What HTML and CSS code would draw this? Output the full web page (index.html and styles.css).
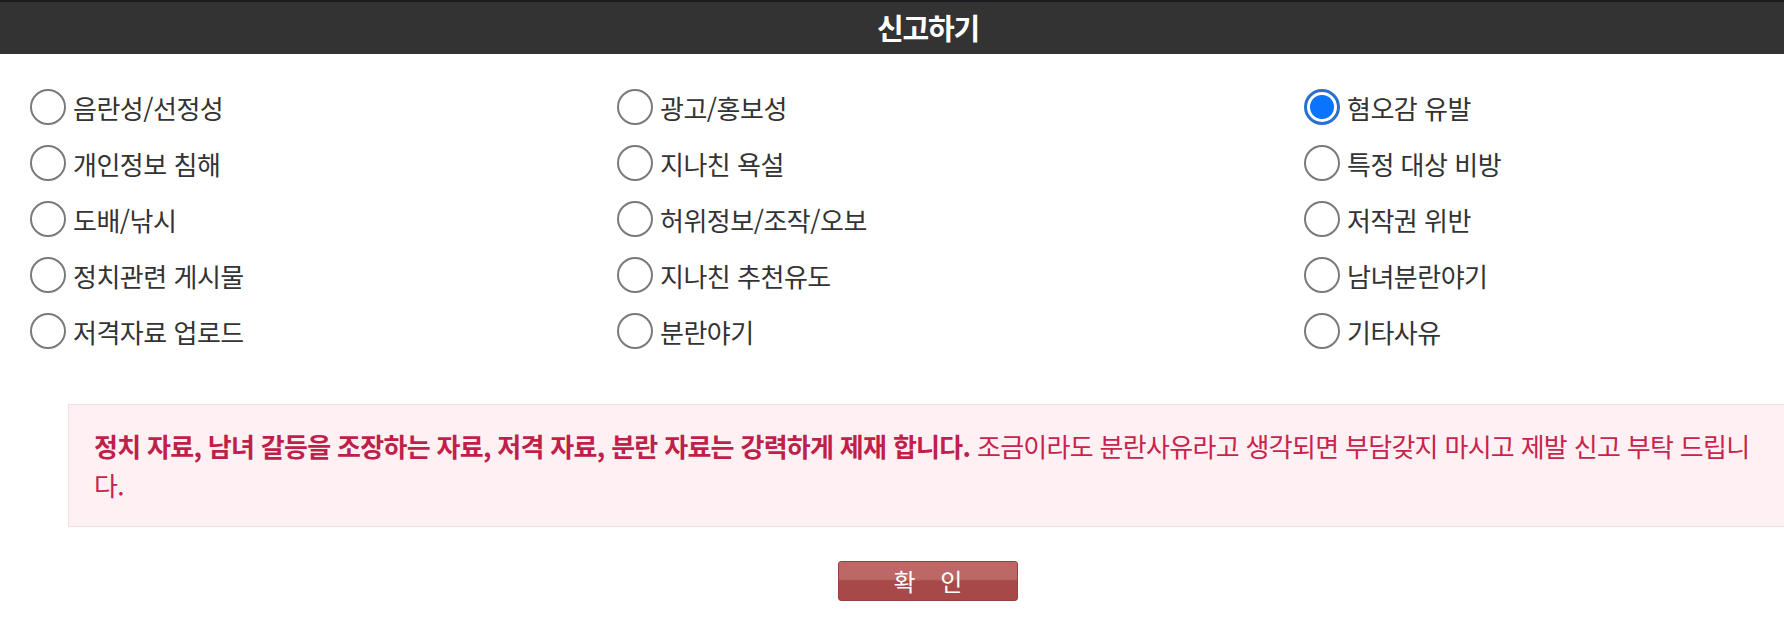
FILE: index.html
```html
<!DOCTYPE html>
<html lang="ko">
<head>
  <meta charset="UTF-8">
  <meta name="viewport" content="width=device-width, initial-scale=1.0">
  <title>신고하기</title>
  <link rel="stylesheet" href="styles.css">
</head>
<body>
  <div class="page">
    <h1 class="title">신고하기</h1>

    <form class="report">
      <div class="options">
        <label class="option"><input type="radio" name="reason" value="1">음란성/선정성</label>
        <label class="option"><input type="radio" name="reason" value="2">광고/홍보성</label>
        <label class="option"><input type="radio" name="reason" value="3" checked>혐오감 유발</label>

        <label class="option"><input type="radio" name="reason" value="4">개인정보 침해</label>
        <label class="option"><input type="radio" name="reason" value="5">지나친 욕설</label>
        <label class="option"><input type="radio" name="reason" value="6">특정 대상 비방</label>

        <label class="option"><input type="radio" name="reason" value="7">도배/낚시</label>
        <label class="option"><input type="radio" name="reason" value="8">허위정보/조작/오보</label>
        <label class="option"><input type="radio" name="reason" value="9">저작권 위반</label>

        <label class="option"><input type="radio" name="reason" value="10">정치관련 게시물</label>
        <label class="option"><input type="radio" name="reason" value="11">지나친 추천유도</label>
        <label class="option"><input type="radio" name="reason" value="12">남녀분란야기</label>

        <label class="option"><input type="radio" name="reason" value="13">저격자료 업로드</label>
        <label class="option"><input type="radio" name="reason" value="14">분란야기</label>
        <label class="option"><input type="radio" name="reason" value="15">기타사유</label>
      </div>

      <div class="notice">
        <strong>정치 자료, 남녀 갈등을 조장하는 자료, 저격 자료, 분란 자료는 강력하게 제재 합니다.</strong>
        조금이라도 분란사유라고 생각되면 부담갖지 마시고 제발 신고 부탁 드립니다.
      </div>

      <div class="actions">
        <button type="button" class="btn-ok">확 인</button>
      </div>
    </form>
  </div>
</body>
</html>
```

FILE: styles.css
```css
html {
  overflow: hidden;
}
body {
  margin: 0;
  padding: 0;
  font-family: "Noto Sans CJK KR", "Noto Sans", sans-serif;
  color: #333;
  background: #fff;
}
.page {
  width: 1856px;
}
.title {
  margin: 0;
  height: 52px;
  line-height: 50px;
  border-top: 2px solid #1b1b20;
  background-color: #333;
  color: #fff;
  font-size: 29px;
  font-weight: bold;
  letter-spacing: -1.2px;
  text-align: center;
}
.options {
  display: grid;
  grid-template-columns: 587px 687px 1fr;
  grid-auto-rows: 56px;
  padding: 25px 0 0 30px;
}
.option {
  display: flex;
  align-items: center;
  gap: 7px;
  font-size: 26px;
  letter-spacing: -0.5px;
  color: #333;
}
.option input {
  appearance: none;
  -webkit-appearance: none;
  width: 36px;
  height: 36px;
  margin: 0;
  flex: none;
  border: 2px solid #7a7a7a;
  border-radius: 50%;
  background: #fff;
}
.option input:checked {
  border: 3px solid #2a70cc;
  background: radial-gradient(circle, #0a74ff 0, #0a74ff 11.5px, #fff 12.5px);
}
.notice {
  margin: 45px 68px 0 68px;
  padding: 21px 25px 22px 25px;
  border: 1px solid #f1dfe4;
  background-color: #fff0f3;
  color: #c8234c;
  font-size: 26px;
  line-height: 39px;
  letter-spacing: -0.7px;
}
.notice strong {
  color: #c01f4a;
}
.actions {
  padding-top: 34px;
  text-align: center;
}
.btn-ok {
  width: 180px;
  height: 40px;
  padding: 0 0 0 9px;
  border: 1px solid #9a3d3d;
  border-radius: 3px;
  background: linear-gradient(#bc6866 0%, #bc6866 45%, #a74949 50%, #a74949 100%);
  color: #fff;
  font-family: "Noto Sans CJK KR", sans-serif;
  font-size: 24px;
  letter-spacing: 9px;
  line-height: 36px;
  cursor: pointer;
}
```
